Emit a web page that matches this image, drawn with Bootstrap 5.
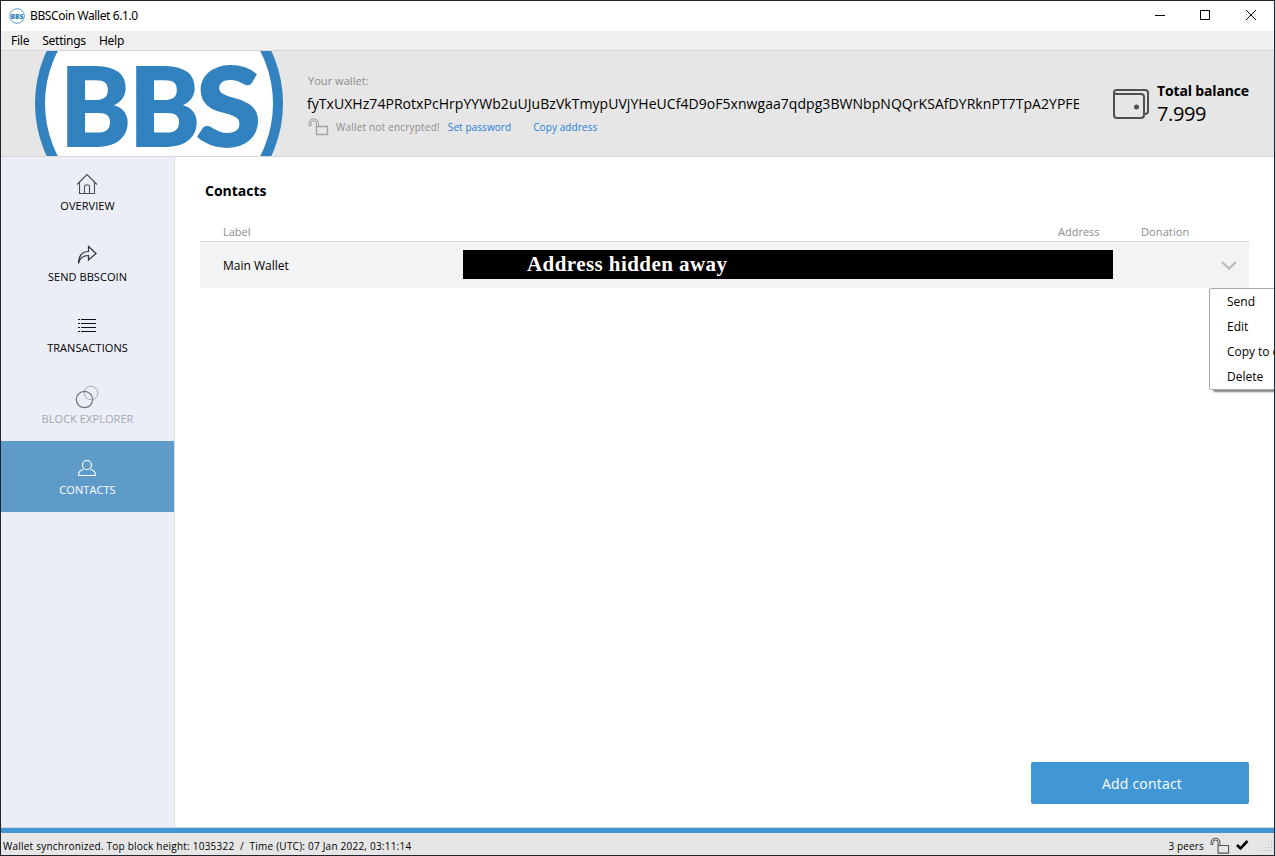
<!DOCTYPE html>
<html lang="en">
<head>
<meta charset="utf-8">
<title>BBSCoin Wallet 6.1.0</title>
<link href="https://cdn.jsdelivr.net/npm/bootstrap@5.3.0/dist/css/bootstrap.min.css" rel="stylesheet">
<style>
body{font-family:"Open Sans","Noto Sans",sans-serif;font-size:12px;line-height:16px;color:#000;background:#fff}
svg{display:block;flex:none}
.win{height:856px;width:1275px;border:1px solid #20242c;overflow:hidden;position:relative}
.titlebar{height:30px;padding:0 17px 0 8px;font-family:"Noto Sans",sans-serif}
.title-text{letter-spacing:-.4px;margin-left:5px}
.menubar{height:20px;background:#efefef;border-bottom:1px solid #d6d6d6;padding-left:10px;gap:13px;font-family:"Noto Sans",sans-serif;letter-spacing:-.25px}
.head{height:106px;background:#e6e6e6;border-bottom:1px solid #d8d8d8}
.logo-cell{width:306px;padding-left:34px}
.wallet-info{width:772px;padding-top:22px}
.muted-text{color:#8c8c8c}
.your{font-size:11px;padding-left:1px;letter-spacing:.05px}
.addr{font-size:14px;line-height:20px;margin-top:5px;white-space:nowrap;overflow:hidden;letter-spacing:.05px}
.tiny{font-size:10px;line-height:16px;letter-spacing:.2px;margin-top:4px;padding-left:1px}
.tiny a{color:#1a7fdc;text-decoration:none;letter-spacing:.08px}
.enc{margin-left:7px}
.copy-link{margin-left:22px}
.bal{width:93px;padding-top:30px}
.tb{font-size:14px;line-height:20px;white-space:nowrap;letter-spacing:-.15px}
.amount{font-size:20px;line-height:26px;letter-spacing:-.4px}
.side{width:174px;background:#ebeef7;border-right:1px solid #dcdcdc}
.side .nav-link{height:71px;padding:15px 0 0 0;color:#000;font-size:11px;line-height:16px;border-radius:0;letter-spacing:.06px}
.side .nav-link.active{background:#5f9bc9;color:#fff}
.side .nav-link.disabled{color:#a6a7ab}
.side svg{margin:0 2px 2px 0}
.page{padding:25px 25px 23px}
h1{font-size:14px;line-height:18px;font-weight:700;margin:0 0 24px 5px}
.thead-row{height:18px;font-size:11px;line-height:16px;border-bottom:1px solid #d9dbdd;padding-left:23px}
.th-addr{width:83px}
.th-don{width:108px;letter-spacing:.1px}
.contact-row{height:46px;background:#f2f3f5}
.c-label{width:263px;padding:2px 0 0 23px}
.redact{width:650px;height:29px;margin-bottom:2px;background:#000;color:#fff;font:700 21px/28px "Liberation Serif",serif;letter-spacing:.43px;padding-left:64px}
.chev{margin-right:12px}
.menu-pop{top:287px;left:1208px;width:130px;height:102px;border:1px solid #aaa;border-radius:2px;background:#fff;box-shadow:4px 2px 2px rgba(0,0,0,.5);padding-left:17px}
.menu-pop div{height:25px;line-height:25px;white-space:nowrap}
.menu-pop .copy-item{letter-spacing:-.06px}
.btn-add,.btn-add:hover{width:218px;height:42px;background:#4197d3;color:#fff;border:0;border-radius:2px;font-size:14px;padding:0 0 0 4px;letter-spacing:.2px}
.statusbar{height:28px;border-top:1px solid #d8d8d8;background:#e6e6e6}
.statusbar-in{height:27px;border-top:5px solid #4197d3;font-size:10px;padding:3px 0 0 2px}
.st{letter-spacing:.225px}
.peers{margin-right:6px;letter-spacing:.15px}
.grip{margin-left:12px}
</style>
</head>
<body>
<div class="win d-flex flex-column">
  <div class="titlebar d-flex align-items-center">
    <svg width="16" height="16" viewBox="0 0 16 16"><circle cx="8" cy="8" r="7.3" fill="#fff" stroke="#5b9bcb"/><text x="1.500" y="10.700" font-family="Open Sans" font-weight="800" font-size="7.500" fill="#2f82c0" textLength="13" lengthAdjust="spacingAndGlyphs">BBS</text></svg>
    <span class="title-text">BBSCoin Wallet 6.1.0</span>
    <div class="ms-auto d-flex pb-1">
      <svg width="102" height="12" viewBox="0 0 102 12" fill="none" stroke="#000"><path d="M0 7.500h10M45.500 2.500h9v9h-9zM91 2l10 10M101 2L91 12"/></svg>
    </div>
  </div>
  <div class="menubar d-flex align-items-center"><span>File</span><span>Settings</span><span>Help</span></div>
  <header class="head d-flex">
    <div class="logo-cell">
      <svg width="248" height="105" viewBox="0 0 248 105"><circle cx="124" cy="52.500" r="119" fill="#fff" stroke="#3182bf" stroke-width="10"/>
        <g font-family="Lato" font-weight="900" font-size="108" fill="#3182bf" stroke="#3182bf" stroke-width="1.800"><text x="25" y="94.800" textLength="71" lengthAdjust="spacingAndGlyphs">B</text><text x="94" y="94.800" textLength="71" lengthAdjust="spacingAndGlyphs">B</text><text x="161" y="94.800" textLength="65" lengthAdjust="spacingAndGlyphs">S</text></g></svg>
    </div>
    <div class="wallet-info">
      <div class="muted-text your">Your wallet:</div>
      <div class="addr">fyTxUXHz74PRotxPcHrpYYWb2uUJuBzVkTmypUVjYHeUCf4D9oF5xnwgaa7qdpg3BWNbpNQQrKSAfDYRknPT7TpA2YPFE</div>
      <div class="tiny d-flex align-items-center">
        <svg width="21" height="18" viewBox="0 0 21 18" fill="none" stroke="#a3a3a3"><path d="M8.500 8.500h11v8h-11z" stroke-width="1.400"/><path d="M2 8V5.500a3.700 3.700 0 0 1 7.500 0V8" stroke-width="3"/><path d="M2 7V5.500a3.700 3.700 0 0 1 7.500 0V8" stroke="#e6e6e6"/></svg>
        <span class="muted-text enc">Wallet not encrypted!</span><a href="#" class="ms-2">Set password</a><a href="#" class="copy-link">Copy address</a>
      </div>
    </div>
    <div class="d-flex ms-auto pe-4">
      <svg class="mt-auto mb-auto" width="38" height="32" viewBox="0 0 38 32" fill="none" stroke="#505050" stroke-width="2"><path d="M3 5v22q0 3 3 3h24q3 0 3-3V9q0-3-3-3H6q-3 0-3-2t3-2h28q3 0 3 3v18q0 3-3 3"/><circle cx="25.500" cy="19" r="2.500" fill="#505050" stroke="none"/></svg>
      <div class="bal ms-2"><div class="fw-bold tb">Total balance</div><div class="amount">7.999</div></div>
    </div>
  </header>
  <div class="d-flex flex-grow-1">
    <nav class="side nav flex-column flex-nowrap">
      <a class="nav-link d-flex flex-column align-items-center" href="#"><svg width="24" height="24" viewBox="0 0 24 24" fill="none" stroke="#4c4e52" stroke-width="1.100"><path d="M2 12.500L12 2.500l10 10M4.500 10.500v11h15v-11M9.500 21.500v-7q0-1.500 1.500-1.500h2q1.500 0 1.500 1.500v7"/></svg>OVERVIEW</a>
      <a class="nav-link d-flex flex-column align-items-center" href="#"><svg width="24" height="24" viewBox="0 0 24 24" fill="none" stroke="#333" stroke-width="1.200"><path d="M3.500 20.500C3.500 13 7 8.500 13.500 8.500v-5L21 10.500l-7.500 6.500v-4.500C8 12.500 4.500 14.500 3.500 20.500z"/></svg>SEND BBSCOIN</a>
      <a class="nav-link d-flex flex-column align-items-center" href="#"><svg width="24" height="24" viewBox="0 0 24 24" fill="none" stroke="#111"><path d="M3 5.500h2M3 9.500h2M3 13.500h2M3 17.500h2M6 5.500h15M6 9.500h15M6 13.500h15M6 17.500h15"/></svg>TRANSACTIONS</a>
      <a class="nav-link disabled d-flex flex-column align-items-center" href="#"><svg width="24" height="24" viewBox="0 0 24 24" fill="none"><circle cx="16" cy="8" r="6.800" stroke="#aaa"/><circle cx="9.500" cy="14.500" r="8.200" stroke="#777" stroke-width="1.200"/></svg>BLOCK EXPLORER</a>
      <a class="nav-link active d-flex flex-column align-items-center" href="#"><svg width="24" height="24" viewBox="0 0 24 24" fill="none" stroke="#fff" stroke-width="1.200"><circle cx="12" cy="9" r="4.500"/><path d="M8.500 13.500C5 14 3.500 15.500 3.500 19.500h17c0-4-1.500-5.500-5-6"/></svg>CONTACTS</a>
    </nav>
    <main class="page flex-grow-1 d-flex flex-column">
      <h1>Contacts</h1>
      <div class="thead-row d-flex muted-text"><span>Label</span><span class="ms-auto th-addr">Address</span><span class="th-don">Donation</span></div>
      <div class="contact-row d-flex align-items-center"><div class="c-label">Main Wallet</div><div class="redact">Address hidden away</div>
        <svg class="chev ms-auto" width="16" height="9" viewBox="0 0 16 9" fill="none" stroke="#b8b9bb" stroke-width="2.200"><path d="M1 1l7 6.500L15 1"/></svg></div>
      <button class="btn btn-add mt-auto ms-auto">Add contact</button>
    </main>
  </div>
  <footer class="statusbar">
    <div class="statusbar-in d-flex align-items-center">
    <span class="st">Wallet synchronized. Top block height: 1035322 &nbsp;/ &nbsp;Time (UTC): 07 Jan 2022, 03:11:14</span>
    <span class="ms-auto peers">3 peers</span>
    <svg width="20" height="18" viewBox="0 0 21 18" fill="none" stroke="#555"><path d="M8.500 8.500h11v8h-11z" stroke-width="1.200"/><path d="M2 8V5.500a3.700 3.700 0 0 1 7.500 0V8" stroke-width="3"/><path d="M2 7V5.500a3.700 3.700 0 0 1 7.500 0V8" stroke="#e6e6e6"/></svg>
    <svg class="ms-1" width="16" height="16" viewBox="0 0 16 16" fill="none" stroke="#000" stroke-width="2.600"><path d="M3 7l3.500 3.500L13.500 3"/></svg>
    <svg class="grip" width="12" height="14" viewBox="0 0 12 14" fill="#bbb"><path d="M9 2h1v1H9zM6 5h1v1H6zM9 5h1v1H9zM3 8h1v1H3zM6 8h1v1H6zM9 8h1v1H9zM0 11h1v1H0zM3 11h1v1H3zM6 11h1v1H6zM9 11h1v1H9z"/></svg>
    </div>
  </footer>
  <div class="menu-pop position-absolute"><div>Send</div><div>Edit</div><div class="copy-item">Copy to clipboard</div><div>Delete</div></div>
</div>
<script src="https://cdn.jsdelivr.net/npm/bootstrap@5.3.0/dist/js/bootstrap.bundle.min.js"></script>
</body>
</html>
